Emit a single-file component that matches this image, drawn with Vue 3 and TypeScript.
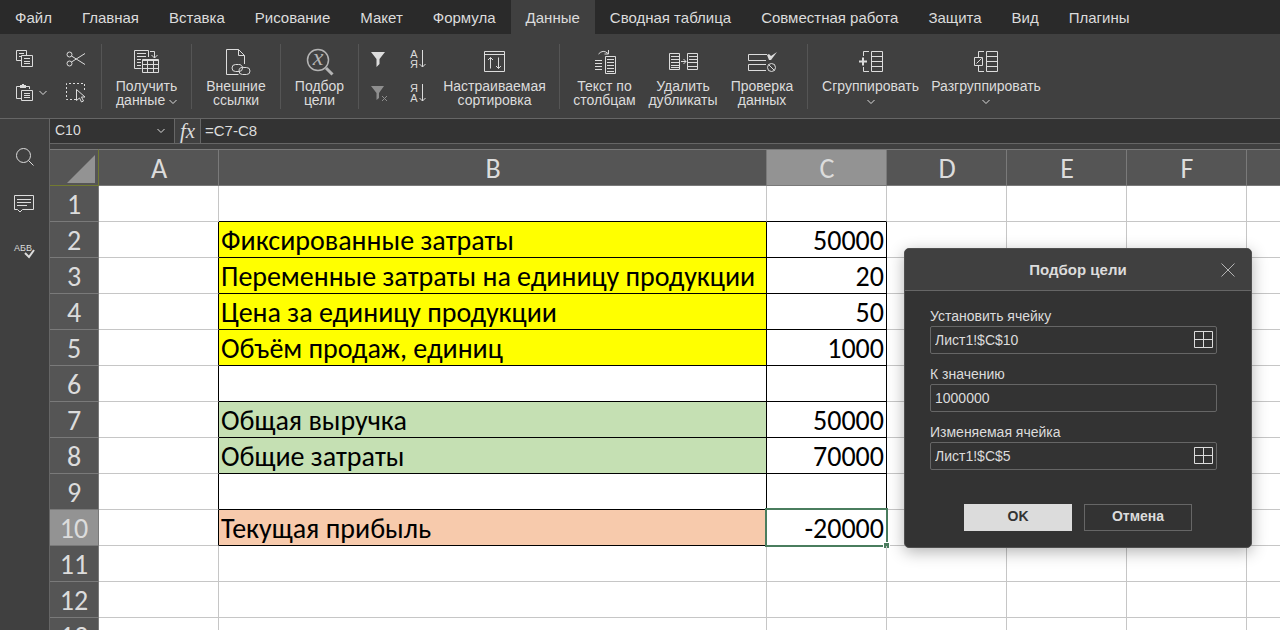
<script setup lang="ts">
import { ref } from 'vue'

interface Tool {
  icon: string
  lines: string[]
  arrow?: 'inline' | 'below'
  width: string
}

interface Row {
  label: string
  value: string
  tone: string
}

const tabs = [
  'Файл', 'Главная', 'Вставка', 'Рисование', 'Макет', 'Формула', 'Данные',
  'Сводная таблица', 'Совместная работа', 'Защита', 'Вид', 'Плагины',
]
const activeTab = ref('Данные')

const importTools: Tool[][] = [
  [{ icon: 'getData', lines: ['Получить', 'данные'], arrow: 'inline', width: 'w-data' }],
  [{ icon: 'links', lines: ['Внешние', 'ссылки'], width: 'w-links' }],
  [{ icon: 'goal', lines: ['Подбор', 'цели'], width: 'w-goal' }],
]
const dataTools: Tool[] = [
  { icon: 'columns', lines: ['Текст по', 'столбцам'], width: 'w-cols' },
  { icon: 'dupes', lines: ['Удалить', 'дубликаты'], width: 'w-dupes' },
  { icon: 'check', lines: ['Проверка', 'данных'], width: 'w-check' },
]
const groupTools: Tool[] = [
  { icon: 'group', lines: ['Сгруппировать'], arrow: 'below', width: 'w-group' },
  { icon: 'ungroup', lines: ['Разгруппировать'], arrow: 'below', width: 'w-ungroup' },
]

const strokes: Record<string, string> = {
  getData: 'M14.5 8V1.5H.5v18h7M3 4.5h9M3 7.5h9M3 10.5h4M3 13.5h4M3 16.5h4M16 2.5h4.5V9M17.5 6l3 3 3-3M8.5 10.5h16v13h-16zM9 11.5h15M8.5 15.5h16M8.5 19.5h16M13.5 11v12M19.5 11v12',
  links: 'M20.5 15V6.5l-6-6h-12v25h12M14.5.5v6h6',
  columns: 'M1 10.5h7M1 13.5h7M1 16.5h7M1 19.5h7M11.5 6.5h10v17h-10zM13 9.5h7M13 12.5h7M13 15.5h7M13 18.5h7M13 21.5h7M4.500 4Q9-1 14 3.500M14.500 0v4h-4',
  dupes: 'M.5 3.5h10v16H.5zM2 6.500h8M2 9.5h8M2 12.5h8M2 15.5h8M2 17.500h8M12 11.5h5M14.500 9l2.500 2.500-2.500 2.500M18.500 3.5h10v16h-10zM20 6.500h8M20 9.500h8M19 12.500h9M19 16.500h9',
  check: 'M19 4.500H.500v6H18M18 14.500H.500v6H18M20.700 14.700l5.600 5.600',
  group: 'M9 1.500H3.500V6M3.500 17v4.500H9M11.500 1.500h11v20h-11zM11.500 6.500h11M11.500 11.500h11M11.500 16.500h11',
  ungroup: 'M9 1.500H3.500V7M3.500 15v6.500H9M11.500 1.500h11v20h-11zM11.500 6.500h11M11.500 11.500h11M11.500 16.500h11M-.500 7.500h8v8h-8zM1.500 13.500l5-5',
}

const columns = ['A', 'B', 'C', 'D', 'E', 'F', '']
const extraColumns = columns.slice(3)
const rowCount = 13
const data: Record<number, Row> = {
  2: { label: 'Фиксированные затраты', value: '50000', tone: 'yellow' },
  3: { label: 'Переменные затраты на единицу продукции', value: '20', tone: 'yellow' },
  4: { label: 'Цена за единицу продукции', value: '50', tone: 'yellow' },
  5: { label: 'Объём продаж, единиц', value: '1000', tone: 'yellow' },
  6: { label: '', value: '', tone: '' },
  7: { label: 'Общая выручка', value: '50000', tone: 'green' },
  8: { label: 'Общие затраты', value: '70000', tone: 'green' },
  9: { label: '', value: '', tone: '' },
  10: { label: 'Текущая прибыль', value: '-20000', tone: 'peach' },
}
const activeRow = 10
const activeColumn = 'C'

const cellName = ref('C10')
const formula = ref('=C7-C8')
const dialogOpen = ref(true)
const fields = ref([
  { id: 'set-cell', label: 'Установить ячейку', value: 'Лист1!$C$10', picker: true },
  { id: 'to-value', label: 'К значению', value: '1000000', picker: false },
  { id: 'by-cell', label: 'Изменяемая ячейка', value: 'Лист1!$C$5', picker: true },
])
</script>

<template>
  <div class="app">
    <nav class="tabs">
      <button
        v-for="tab in tabs"
        :key="tab"
        type="button"
        class="tab"
        :class="{ active: tab === activeTab }"
        @click="activeTab = tab"
      >{{ tab }}</button>
    </nav>

    <div class="toolbar">
      <div class="group clip">
        <button type="button" class="mini" aria-label="Копировать">
          <svg width="18" height="18" viewBox="0 0 18 18"><path d="M5 10.500H.500V.500h10V5M3 3.500h5M3 6.500h2M5.500 5.500h11v11h-11zM8 8.500h6M8 11.500h6M8 13.500h6" /></svg>
        </button>
        <button type="button" class="mini" aria-label="Вырезать">
          <svg width="20" height="16" viewBox="0 0 20 16"><circle cx="3.500" cy="3.500" r="2.500" /><circle cx="3.500" cy="12.500" r="2.500" /><path d="M5.500 5L19 13.500M5.500 11L19 2.500" /></svg>
        </button>
        <button type="button" class="mini paste" aria-label="Вставить">
          <svg width="18" height="18" viewBox="0 0 18 18"><path d="M5 14.500H.500v-12H4M10 2.500h3.500V5M5.500 6.500h11v10h-11zM8 9.500h6M8 11.500h6M8 13.500h6" /><path class="solid" d="M4 1h2V0h2v1h2v3H4z" /></svg>
          <svg width="8" height="6" viewBox="0 0 8 6"><path d="M.5 1L4 4.500 7.500 1" /></svg>
        </button>
        <button type="button" class="mini" aria-label="Выделить">
          <svg width="20" height="20" viewBox="0 0 20 20"><path stroke-dasharray="2 2" d="M10 16.500H.500V.500h18V9" /><path d="M10.500 6.500v11l3-2.500 2 4 2-1-2-4h3.500z" /></svg>
        </button>
      </div>

      <div v-for="(g, i) in importTools" :key="i" class="group">
        <button v-for="t in g" :key="t.icon" type="button" class="tool" :class="t.width">
          <svg v-if="t.icon === 'goal'" class="dim" width="28" height="28" viewBox="0 0 28 28">
            <circle cx="12" cy="12" r="10.500" stroke-width="1.500" /><path stroke-width="3" d="M20 20l6.500 6.500" />
            <text x="12" y="17" text-anchor="middle">x</text>
          </svg>
          <svg v-else-if="t.icon === 'links'" width="28" height="28" viewBox="-2 -1 28 28">
            <path :d="strokes.links" />
            <rect class="cover" x="8" y="15" width="18" height="10" />
            <path d="M14.500 15.500h-3a3.500 3.500 0 0 0 0 7h3.500a3.500 3.500 0 0 0 3.500-3.500 3.500 3.500 0 0 0-4-3.500M20 18.500h2.500a3.500 3.500 0 0 1 0 7h-4a3.500 3.500 0 0 1-3.500-3.500 3.500 3.500 0 0 1 5-3.500" />
          </svg>
          <svg v-else width="26" height="28" viewBox="0 -1 26 28"><path :d="strokes[t.icon]" /></svg>
          <span class="caption">
            {{ t.lines[0] }}<br>{{ t.lines[1] }}
            <svg v-if="t.arrow" width="8" height="6" viewBox="0 0 8 6"><path d="M.5 1L4 4.500 7.500 1" /></svg>
          </span>
        </button>
      </div>

      <div class="group filters">
        <div class="sorts">
          <button type="button" class="mini" aria-label="Фильтр">
            <svg width="18" height="18" viewBox="0 0 18 18"><path class="solid" d="M1 2h14l-5.500 7v5L6.500 17V9z" /></svg>
          </button>
          <button type="button" class="mini" aria-label="Сортировка по возрастанию">
            <svg width="18" height="20" viewBox="0 0 18 20"><text x="5" y="9" text-anchor="middle">А</text><text x="5" y="19" text-anchor="middle">Я</text><path d="M13.500 1v17M10.500 15l3 3 3-3" /></svg>
          </button>
          <button type="button" class="mini off" aria-label="Очистить фильтр">
            <svg width="18" height="18" viewBox="0 0 18 18"><path class="solid" d="M1 2h13L9 9v5L6.500 16V9z" /><path d="M12 12l5 5M17 12l-5 5" /></svg>
          </button>
          <button type="button" class="mini" aria-label="Сортировка по убыванию">
            <svg width="18" height="20" viewBox="0 0 18 20"><text x="5" y="9" text-anchor="middle">Я</text><text x="5" y="19" text-anchor="middle">А</text><path d="M13.500 1v17M10.500 15l3 3 3-3" /></svg>
          </button>
        </div>
        <button type="button" class="tool w-sort">
          <svg width="22" height="28" viewBox="0 -1 22 28"><path d="M.500 2.500h20v20H.500zM.500 5.500h20M6.500 8.500v11M4 11l2.500-2.500L9 11M14.500 8.500v11M12 17l2.500 2.500L17 17" /></svg>
          <span class="caption">Настраиваемая<br>сортировка</span>
        </button>
      </div>

      <div class="group spaced">
        <button v-for="t in dataTools" :key="t.icon" type="button" class="tool" :class="t.width">
          <svg width="30" height="28" :viewBox="t.icon === 'columns' ? '-4 -2 30 28' : '-1 -2 30 28'">
            <path :d="strokes[t.icon]" />
            <template v-if="t.icon === 'check'">
              <circle cx="23.500" cy="17.500" r="4" />
              <path class="solid" d="M19 5l2-1 2 2 6-4-6 8h-2z" />
            </template>
          </svg>
          <span class="caption">{{ t.lines[0] }}<br>{{ t.lines[1] }}</span>
        </button>
      </div>

      <div class="group grouping">
        <button v-for="t in groupTools" :key="t.icon" type="button" class="tool" :class="t.width">
          <svg width="26" height="28" viewBox="-2 -2 26 28">
            <path :d="strokes[t.icon]" />
            <path v-if="t.icon === 'group'" stroke-width="2" d="M-1 11.500h8M3 7.500v8" />
          </svg>
          <span class="caption">{{ t.lines[0] }}<br><svg width="8" height="6" viewBox="0 0 8 6"><path d="M.5 1L4 4.500 7.500 1" /></svg></span>
        </button>
      </div>
    </div>

    <div class="workspace">
      <aside class="side">
        <button type="button" class="side-btn" aria-label="Поиск">
          <svg width="20" height="20" viewBox="0 0 20 20"><circle cx="8.500" cy="8.500" r="7" /><path d="M13.500 13.500l5 5" /></svg>
        </button>
        <button type="button" class="side-btn" aria-label="Комментарии">
          <svg width="22" height="20" viewBox="0 0 22 20"><path d="M.500 1.500h19v14H8.500l-2.500 2.500-2.500-2.500h-3zM3 5.500h14M3 8.500h14M3 11.500h10" /></svg>
        </button>
        <button type="button" class="side-btn" aria-label="Проверка орфографии">
          <svg class="spell" width="22" height="20" viewBox="0 0 22 20"><text x="0" y="10">АБВ</text><path stroke-width="2" d="M11 12l4 4 5-7" /></svg>
        </button>
      </aside>

      <main class="main">
        <div class="formula-bar">
          <div class="name-box">
            <input v-model="cellName" aria-label="Имя ячейки">
            <svg width="10" height="6" viewBox="0 0 10 6"><path d="M1.500 1l3.500 3.500L8.500 1" /></svg>
          </div>
          <button type="button" class="fx">fx</button>
          <input v-model="formula" class="formula" aria-label="Формула">
        </div>

        <div class="sheet">
          <table>
            <colgroup>
              <col class="col-head"><col class="col-std"><col class="col-wide">
              <col class="col-std"><col class="col-std"><col class="col-std"><col class="col-std"><col>
            </colgroup>
            <thead>
              <tr>
                <th class="corner"><svg width="28" height="28" viewBox="0 0 28 28"><path d="M28 0v28H0z" /></svg></th>
                <th v-for="c in columns" :key="c" scope="col" :class="{ current: c === activeColumn }">{{ c }}</th>
              </tr>
            </thead>
            <tbody>
              <tr v-for="r in rowCount" :key="r" :class="{ filled: r in data, before: r === 1 }">
                <th scope="row" :class="{ current: r === activeRow }">{{ r }}</th>
                <td class="a"></td>
                <td class="b" :class="data[r]?.tone">{{ data[r]?.label }}</td>
                <td class="c">{{ data[r]?.value }}<span v-if="r === activeRow" class="selection"></span></td>
                <td v-for="c in extraColumns" :key="c"></td>
              </tr>
            </tbody>
          </table>
        </div>
      </main>
    </div>

    <form v-if="dialogOpen" class="dialog" role="dialog" aria-labelledby="dialog-title" @submit.prevent="dialogOpen = false">
      <header>
        <h2 id="dialog-title">Подбор цели</h2>
        <button type="button" class="close" aria-label="Закрыть" @click="dialogOpen = false">
          <svg width="14" height="14" viewBox="0 0 14 14"><path d="M.500.500l13 13M13.500.500l-13 13" /></svg>
        </button>
      </header>
      <div class="fields">
        <div v-for="f in fields" :key="f.id" class="field">
          <label :for="f.id">{{ f.label }}</label>
          <div class="box">
            <input :id="f.id" v-model="f.value">
            <button v-if="f.picker" type="button" aria-label="Выбор данных">
              <svg width="20" height="18" viewBox="0 0 20 18"><path d="M.500.500h18v16H.500zM9.500.500v16M.500 8.500h18" /></svg>
            </button>
          </div>
        </div>
      </div>
      <footer>
        <button type="submit" class="ok">OK</button>
        <button type="button" class="cancel" @click="dialogOpen = false">Отмена</button>
      </footer>
    </form>
  </div>
</template>

<style>
body {
  margin: 0;
  overflow: hidden;
}
</style>

<style scoped>
.app {
  position: relative;
  display: flex;
  flex-direction: column;
  height: 100vh;
  overflow: hidden;
  background: #404040;
  color: #dcdcdc;
  font-family: "Liberation Sans", Arial, sans-serif;
  font-size: 14px;
}
*, *::before, *::after { box-sizing: border-box; }
button, input {
  margin: 0;
  padding: 0;
  border: 0;
  background: none;
  color: inherit;
  font: inherit;
}
svg {
  flex: none;
  overflow: visible;
  fill: none;
  stroke: #dcdcdc;
}
svg text {
  fill: #dcdcdc;
  stroke: none;
  font-size: 11px;
}
.spell text { font-size: 9px; }
.solid { fill: #dcdcdc; stroke: none; }
.cover { fill: #404040; stroke: none; }
.dim { stroke: #b4b4b4; }
.dim text {
  fill: #b4b4b4;
  font: italic 24px "Liberation Serif", serif;
}

.tabs {
  display: flex;
  flex: none;
  height: 34px;
  background: #2a2a2a;
}
.tab {
  padding: 0 15px;
  font-size: 15px;
  white-space: nowrap;
}
.tab.active { background: #404040; }

.toolbar {
  display: flex;
  flex: none;
  height: 85px;
  padding: 10px 0 9px;
  border-bottom: 1px solid #666;
}
.group {
  display: flex;
  flex: none;
  border-right: 1px solid #555;
}
.spaced { padding: 0 7px; }
.grouping {
  padding: 0 8px;
  border-right: 0;
}
.mini {
  display: flex;
  align-items: center;
  justify-content: center;
  gap: 5px;
}
.clip {
  display: grid;
  grid-template-columns: 50px 52px;
  grid-template-rows: 30px 38px;
  width: 102px;
}
.paste { padding-left: 13px; }
.sorts {
  display: grid;
  grid-template-columns: 39px 39px;
  grid-template-rows: 30px 38px;
}
.filters { width: 201px; }
.off { opacity: 0.5; }
.tool {
  display: flex;
  flex-direction: column;
  align-items: center;
  gap: 3px;
  padding-top: 4px;
}
.caption {
  font-size: 14px;
  line-height: 14px;
  white-space: nowrap;
}
.w-data { width: 89px; }
.w-links { width: 88px; }
.w-goal { width: 77px; }
.w-sort { width: 115px; }
.w-cols { width: 75px; }
.w-dupes { width: 82px; }
.w-check { width: 76px; }
.w-group { width: 109px; }
.w-ungroup { width: 122px; }

.workspace {
  display: flex;
  flex: 1;
  min-height: 0;
}
.side {
  display: flex;
  flex: none;
  flex-direction: column;
  width: 49px;
  padding-top: 14px;
}
.side-btn {
  display: flex;
  align-items: center;
  justify-content: center;
  height: 47px;
}
.main {
  display: flex;
  flex: 1;
  flex-direction: column;
  gap: 5px;
  min-width: 0;
  border-left: 1px solid #666;
}
.formula-bar {
  display: flex;
  flex: none;
  height: 25px;
  border-bottom: 1px solid #666;
  background: #333;
}
.name-box {
  display: flex;
  align-items: center;
  width: 125px;
  padding: 0 8px 0 5px;
  border-right: 1px solid #666;
}
.name-box input {
  flex: 1;
  min-width: 0;
  padding-bottom: 2px;
}
.fx {
  width: 26px;
  border-right: 1px solid #666;
  background: #404040;
  font: italic 21px "Liberation Serif", serif;
  line-height: 22px;
}
.formula {
  flex: 1;
  padding: 0 4px 2px;
  font-size: 15px;
}
.sheet {
  flex: 1;
  min-height: 0;
  overflow: hidden;
  background: #fff;
}
table {
  table-layout: fixed;
  width: 100%;
  border-collapse: separate;
  border-spacing: 0;
  color: #000;
  font-family: Carlito, Calibri, "Noto Sans", sans-serif;
  font-size: 28px;
  line-height: 33px;
}
.col-head { width: 49px; }
.col-std { width: 120px; }
.col-wide { width: 548px; }
th, td {
  height: 36px;
  padding: 2px 0 0;
  border-right: 1px solid #c6c6c6;
  border-bottom: 1px solid #c6c6c6;
  white-space: nowrap;
}
th {
  border-color: #7a7a7a;
  background: #555;
  color: #dcdcdc;
  font-weight: 400;
}
thead th {
  height: 37px;
  padding-left: 1px;
  border-top: 1px solid #7a7a7a;
}
th:last-child, td:last-child { border-right: 0; }
th.current { background: #939393; }
.corner {
  border-right-color: #727a30;
  border-bottom-color: #727a30;
}
.corner svg {
  display: block;
  margin: 0 3px 0 auto;
  fill: #939393;
  stroke: none;
}
.b { padding-left: 2px; }
.c {
  position: relative;
  padding-right: 2px;
  text-align: right;
}
.filled .a { border-right-color: #000; }
.filled .b, .filled .c { border-color: #000; }
.before .b, .before .c { border-bottom-color: #000; }
.yellow { background: #ff0; }
.green { background: #c5e0b3; }
.peach { background: #f7caac; }
.selection {
  position: absolute;
  inset: -2px;
  border: 2px solid #4a7d5e;
}
.selection::after {
  position: absolute;
  right: -4px;
  bottom: -4px;
  width: 7px;
  height: 7px;
  border: 1px solid #fff;
  background: #4a7d5e;
  content: "";
}

.dialog {
  position: absolute;
  top: 248px;
  left: 904px;
  width: 348px;
  border: 1px solid #505050;
  border-radius: 5px;
  background: #333;
  box-shadow: 0 4px 16px rgba(0, 0, 0, 0.3);
}
.dialog header {
  display: flex;
  align-items: center;
  height: 42px;
  padding: 0 16px 0 30px;
  border-bottom: 1px solid #666;
  border-radius: 4px 4px 0 0;
  background: #404040;
}
h2 {
  flex: 1;
  margin: 0;
  font-size: 15px;
  text-align: center;
}
.close {
  display: flex;
}
.close svg { stroke: #b4b4b4; }
.fields {
  display: grid;
  gap: 10px;
  padding: 15px 34px 0 25px;
}
.field label {
  display: block;
  line-height: 20px;
}
.box {
  display: flex;
  align-items: center;
  height: 28px;
  padding: 0 2px 0 4px;
  border: 1px solid #666;
  border-radius: 2px;
}
.box input {
  flex: 1;
  min-width: 0;
  padding-bottom: 1px;
}
.box button { display: flex; }
.dialog footer {
  display: flex;
  justify-content: center;
  gap: 12px;
  padding: 34px 0 16px;
}
.dialog footer button {
  width: 108px;
  height: 27px;
  padding-bottom: 3px;
  font-weight: 700;
}
.dialog footer .ok {
  background: #dcdcdc;
  color: #333;
}
.dialog footer .cancel { border: 1px solid #666; }
</style>
